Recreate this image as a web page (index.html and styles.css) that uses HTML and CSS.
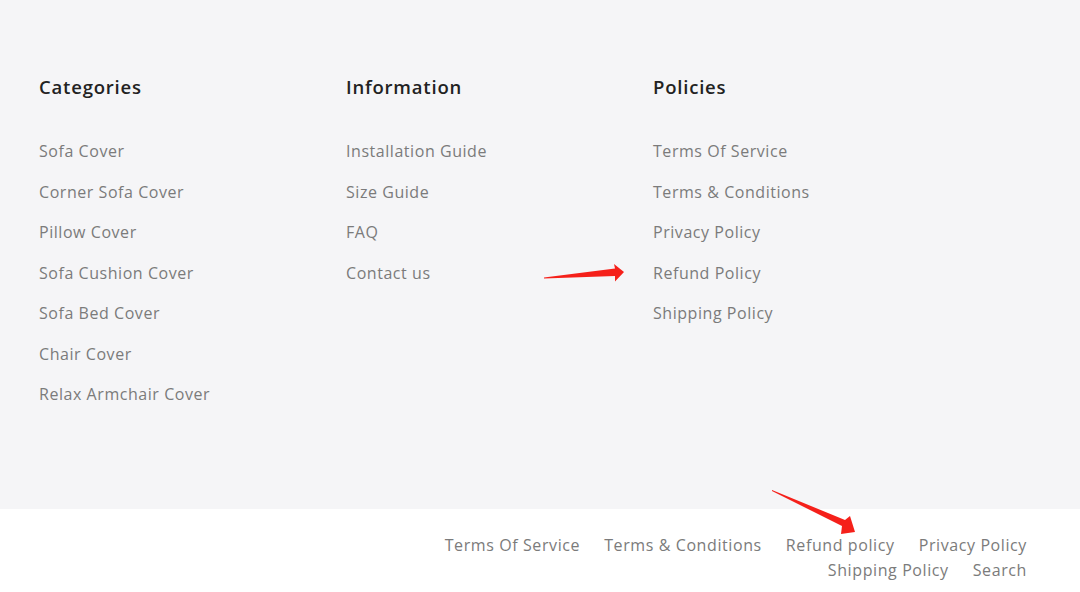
FILE: index.html
```html
<!DOCTYPE html>
<html lang="en">
<head>
    <meta charset="UTF-8">
    <meta name="viewport" content="width=device-width, initial-scale=1.0">
    <title>Footer</title>
    <link rel="stylesheet" href="styles.css">
</head>
<body>

<footer class="footer">
    <div class="footer-top">
        <div class="col">
            <h3>Categories</h3>
            <ul>
                <li><a href="#">Sofa Cover</a></li>
                <li><a href="#">Corner Sofa Cover</a></li>
                <li><a href="#">Pillow Cover</a></li>
                <li><a href="#">Sofa Cushion Cover</a></li>
                <li><a href="#">Sofa Bed Cover</a></li>
                <li><a href="#">Chair Cover</a></li>
                <li><a href="#">Relax Armchair Cover</a></li>
            </ul>
        </div>
        <div class="col">
            <h3>Information</h3>
            <ul>
                <li><a href="#">Installation Guide</a></li>
                <li><a href="#">Size Guide</a></li>
                <li><a href="#">FAQ</a></li>
                <li><a href="#">Contact us</a></li>
            </ul>
        </div>
        <div class="col">
            <h3>Policies</h3>
            <ul>
                <li><a href="#">Terms Of Service</a></li>
                <li><a href="#">Terms &amp; Conditions</a></li>
                <li><a href="#">Privacy Policy</a></li>
                <li><a href="#">Refund Policy</a></li>
                <li><a href="#">Shipping Policy</a></li>
            </ul>
        </div>
    </div>

    <div class="footer-bottom">
        <nav class="bottom-links">
            <a href="#">Terms Of Service</a>
            <a href="#">Terms &amp; Conditions</a>
            <a href="#">Refund policy</a>
            <a href="#">Privacy Policy</a>
            <a href="#">Shipping Policy</a>
            <a href="#">Search</a>
        </nav>
    </div>

    <!-- setas vermelhas de anotação -->
    <svg class="arrows" width="1080" height="592" viewBox="0 0 1080 592">
        <polygon points="544,277.5 615,268.5 614,264 624,272 615,281.5 615,276 544,278.5" fill="#f5201a"/>
        <polygon points="772,490 845,520 850,516 855,532 841,534 842,526 772,491" fill="#f5201a"/>
    </svg>
</footer>

</body>
</html>
```

FILE: styles.css
```css
body {
    margin: 0;
    padding: 0;
    font-family: "Open Sans", Arial, sans-serif;
    background-color: #fff;
}
.footer {
    position: relative;
    height: 592px;
}
.footer-top {
    display: flex;
    background-color: #f5f5f7;
    height: 509px;
    padding: 0 39px;
    box-sizing: border-box;
}
.col {
    width: 307px;
    padding-top: 73px;
}
.col h3 {
    margin: 0;
    font-size: 18.5px;
    font-weight: 600;
    letter-spacing: 0.8px;
    color: #222;
    line-height: 27px;
}
.col ul {
    list-style: none;
    margin: 39px 0 0;
    padding: 0;
}
.col li {
    height: 40.5px;
    font-size: 16px;
    letter-spacing: 0.55px;
    line-height: 24px;
}
.col a, .bottom-links a {
    color: #7b7b7b;
    text-decoration: none;
}
.footer-bottom {
    padding: 24px 53px 0 0;
}
.bottom-links {
    display: flex;
    flex-wrap: wrap;
    justify-content: flex-end;
    column-gap: 24px;
    margin-left: 420px;
    font-size: 16px;
    letter-spacing: 0.6px;
    line-height: 25px;
}
.arrows {
    position: absolute;
    top: 0;
    left: 0;
    pointer-events: none;
}
```
